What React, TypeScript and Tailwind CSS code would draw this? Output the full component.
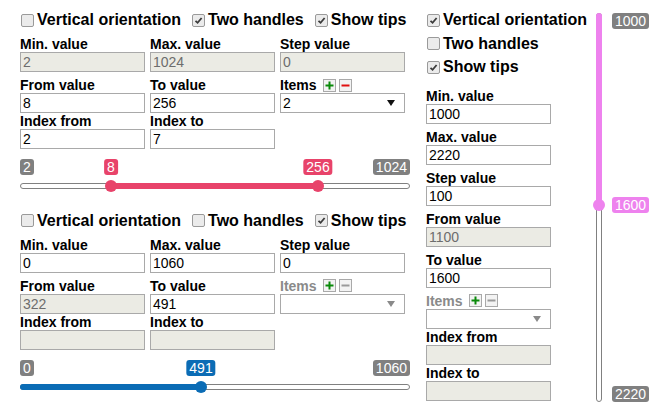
import React from 'react';

type Field = {
  label: string;
  value?: string;
  disabled?: boolean;
};

const font = "font-['Liberation_Sans',Arial,sans-serif]";

function Checkbox({ checked, label }: { checked: boolean; label: string }) {
  return (
    <div className="flex h-[18px] shrink-0 items-center whitespace-nowrap">
      <span className="ml-[1px] flex h-[13px] w-[13px] shrink-0 items-center justify-center rounded-[2px] border border-[#9a9a9a] bg-[#ebebeb]">
        {checked && (
          <svg width="9" height="9" viewBox="0 0 9 9">
            <path d="M1.5 4.8 L3.6 6.8 L7.6 2" fill="none" stroke="#3b3b3b" strokeWidth="1.8" />
          </svg>
        )}
      </span>
      <span className="ml-[3px] text-[16px] font-bold leading-[18px]">{label}</span>
    </div>
  );
}

function Input({ value, disabled }: { value?: string; disabled?: boolean }) {
  return (
    <div
      className={`h-[20px] w-[125px] border border-[#a9a9a9] px-[2px] text-[14px] leading-[18px] ${
        disabled ? 'bg-[#ebebe4] text-[#6d6d6d]' : 'bg-white text-black'
      }`}
    >
      {value}
    </div>
  );
}

function FieldBox({ label, value, disabled }: Field) {
  return (
    <div className="flex flex-col">
      <div className="h-[16px] whitespace-nowrap text-[14px] font-bold leading-[16px]">{label}</div>
      <Input value={value} disabled={disabled} />
    </div>
  );
}

function ItemsField({ value, disabled }: { value?: string; disabled?: boolean }) {
  return (
    <div className="flex flex-col">
      <div className="flex h-[16px] items-center">
        <span className={`text-[14px] font-bold leading-[16px] ${disabled ? 'text-[#8a8a8a]' : ''}`}>Items</span>
        <span className="ml-[6px] flex h-[13px] w-[13px] items-center justify-center border border-[#a9a9a9] bg-[#f3f3f3]">
          <svg width="9" height="9" viewBox="0 0 9 9">
            <path d="M4.5 0.5 V8.5 M0.5 4.5 H8.5" stroke="#0a8a0a" strokeWidth="2" />
          </svg>
        </span>
        <span className="ml-[3px] flex h-[13px] w-[13px] items-center justify-center border border-[#a9a9a9] bg-[#f3f3f3]">
          <svg width="9" height="9" viewBox="0 0 9 9">
            <path d="M0.5 4.5 H8.5" stroke={disabled ? '#9a9a9a' : '#e01010'} strokeWidth="2" />
          </svg>
        </span>
      </div>
      <div className="flex h-[20px] w-[125px] items-center justify-between border border-[#a9a9a9] bg-white pl-[2px] pr-[9px] text-[14px] leading-[18px]">
        <span>{value}</span>
        <svg width="8" height="6" viewBox="0 0 8 6">
          <path d="M0 0 H8 L4 6 Z" fill={disabled ? '#8a8a8a' : '#111'} />
        </svg>
      </div>
    </div>
  );
}

function Tip({ text, color, className }: { text: string; color: string; className: string }) {
  return (
    <div
      className={`absolute whitespace-nowrap rounded-[3px] px-[3px] text-[14px] leading-[16px] text-white ${className}`}
      style={{ backgroundColor: color }}
    >
      {text}
    </div>
  );
}

function TipAt({ x, text, color }: { x: number; text: string; color: string }) {
  return (
    <div className="absolute top-0" style={{ left: x }}>
      <div
        className="-translate-x-1/2 whitespace-nowrap rounded-[3px] px-[3px] text-[14px] leading-[16px] text-white"
        style={{ backgroundColor: color }}
      >
        {text}
      </div>
    </div>
  );
}

type SliderProps = {
  color: string;
  fillFrom: number;
  fillTo: number;
  handles: { x: number; label: string }[];
  min: string;
  max: string;
};

function Slider({ color, fillFrom, fillTo, handles, min, max }: SliderProps) {
  return (
    <div className="relative mt-[10px] h-[36px] w-[390px]">
      <Tip text={min} color="#808080" className="left-0 top-0" />
      <Tip text={max} color="#808080" className="right-0 top-0" />
      {handles.map((h) => (
        <TipAt key={h.label} x={h.x} text={h.label} color={color} />
      ))}
      <div className="absolute left-0 top-[24px] h-[6px] w-[390px] rounded-full border border-[#808080] bg-white" />
      <div
        className={`absolute top-[24px] h-[6px] ${fillFrom === 0 ? 'rounded-l-full' : ''}`}
        style={{ left: fillFrom, width: fillTo - fillFrom, backgroundColor: color }}
      />
      {handles.map((h) => (
        <div
          key={'h' + h.label}
          className="absolute top-[21px] h-[12px] w-[12px] rounded-full"
          style={{ left: h.x - 6, backgroundColor: color }}
        />
      ))}
    </div>
  );
}

function Section({
  checks,
  row1,
  row2,
  items,
  row3,
  slider,
}: {
  checks: boolean[];
  row1: Field[];
  row2: Field[];
  items: { value?: string; disabled?: boolean };
  row3: Field[];
  slider: SliderProps;
}) {
  return (
    <div className="flex h-[204px] flex-col">
      <div className="flex gap-[10px]">
        <Checkbox checked={checks[0]} label="Vertical orientation" />
        <Checkbox checked={checks[1]} label="Two handles" />
        <Checkbox checked={checks[2]} label="Show tips" />
      </div>
      <div className="mt-[7px] grid grid-cols-[125px_125px_125px] gap-x-[5px]">
        {row1.map((f) => (
          <FieldBox key={f.label} {...f} />
        ))}
      </div>
      <div className="mt-[5px] grid grid-cols-[125px_125px_125px] gap-x-[5px]">
        {row2.map((f) => (
          <FieldBox key={f.label} {...f} />
        ))}
        <ItemsField {...items} />
      </div>
      <div className="grid grid-cols-[125px_125px_125px] gap-x-[5px]">
        {row3.map((f) => (
          <FieldBox key={f.label} {...f} />
        ))}
      </div>
      <Slider {...slider} />
    </div>
  );
}

export default function App() {
  return (
    <div className={`flex h-[412px] w-[668px] overflow-hidden bg-white pl-[20px] pt-[11px] text-black ${font}`}>
      <div className="flex w-[390px] shrink-0 flex-col">
        <Section
          checks={[false, true, true]}
          row1={[
            { label: 'Min. value', value: '2', disabled: true },
            { label: 'Max. value', value: '1024', disabled: true },
            { label: 'Step value', value: '0', disabled: true },
          ]}
          row2={[
            { label: 'From value', value: '8' },
            { label: 'To value', value: '256' },
          ]}
          items={{ value: '2' }}
          row3={[
            { label: 'Index from', value: '2' },
            { label: 'Index to', value: '7' },
          ]}
          slider={{
            color: '#e8436a',
            fillFrom: 91,
            fillTo: 298,
            handles: [
              { x: 91, label: '8' },
              { x: 298, label: '256' },
            ],
            min: '2',
            max: '1024',
          }}
        />
        <Section
          checks={[false, false, true]}
          row1={[
            { label: 'Min. value', value: '0' },
            { label: 'Max. value', value: '1060' },
            { label: 'Step value', value: '0' },
          ]}
          row2={[
            { label: 'From value', value: '322', disabled: true },
            { label: 'To value', value: '491' },
          ]}
          items={{ disabled: true }}
          row3={[
            { label: 'Index from', disabled: true },
            { label: 'Index to', disabled: true },
          ]}
          slider={{
            color: '#0b6cb5',
            fillFrom: 0,
            fillTo: 181,
            handles: [{ x: 181, label: '491' }],
            min: '0',
            max: '1060',
          }}
        />
      </div>

      <div className="ml-[16px] flex w-[125px] shrink-0 flex-col">
        <div className="flex flex-col gap-[5.5px]">
          <Checkbox checked label="Vertical orientation" />
          <Checkbox checked={false} label="Two handles" />
          <Checkbox checked label="Show tips" />
        </div>
        <div className="mt-[11.5px] flex flex-col gap-[5px]">
          <FieldBox label="Min. value" value="1000" />
          <FieldBox label="Max. value" value="2220" />
          <FieldBox label="Step value" value="100" />
          <FieldBox label="From value" value="1100" disabled />
          <FieldBox label="To value" value="1600" />
        </div>
        <div className="mt-[5px]">
          <ItemsField disabled />
        </div>
        <FieldBox label="Index from" disabled />
        <FieldBox label="Index to" disabled />
      </div>

      <div className="relative ml-[45px] mt-[2px] h-[389px] w-[60px] shrink-0">
        <div className="absolute left-0 top-0 h-[389px] w-[6px] rounded-full border border-[#808080] bg-white" />
        <div className="absolute left-0 top-0 h-[192px] w-[6px] rounded-t-full bg-[#ee82ee]" />
        <div className="absolute left-[-3px] top-[186px] h-[12px] w-[12px] rounded-full bg-[#ee82ee]" />
        <div className="absolute left-[16px] top-0 rounded-[3px] bg-[#808080] px-[3px] text-[14px] leading-[16px] text-white">
          1000
        </div>
        <div className="absolute left-[16px] top-[184px] rounded-[3px] bg-[#ee82ee] px-[3px] text-[14px] leading-[16px] text-white">
          1600
        </div>
        <div className="absolute bottom-0 left-[16px] rounded-[3px] bg-[#808080] px-[3px] text-[14px] leading-[16px] text-white">
          2220
        </div>
      </div>
    </div>
  );
}
